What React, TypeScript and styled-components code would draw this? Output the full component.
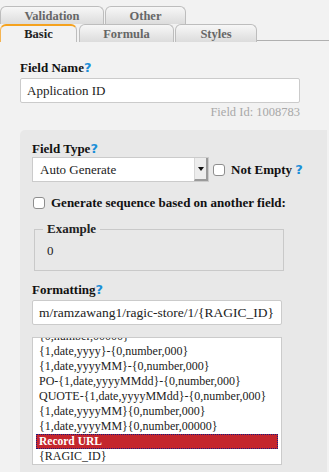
import React, { useLayoutEffect, useRef } from "react";
import styled, { createGlobalStyle, css } from "styled-components";

const GlobalStyle = createGlobalStyle`
  html, body {
    margin: 0;
    padding: 0;
    background: #f2f2f2;
  }
  body {
    font-family: "Liberation Serif", "Times New Roman", serif;
    color: #222;
  }
`;

const Page = styled.div`
  width: 329px;
  height: 472px;
  overflow: hidden;
  background: #f2f2f2;
  display: flex;
  flex-direction: column;
`;

const TabStrip = styled.div`
  padding-top: 6px;
  display: flex;
  flex-direction: column;
`;

const TabRow = styled.div`
  display: flex;
  align-items: flex-end;
  height: 18px;
`;

const Tab = styled.div<{ $w: number; $active?: boolean; $gap?: number }>`
  width: ${(p) => p.$w}px;
  margin-right: ${(p) => p.$gap ?? 1}px;
  height: 18px;
  box-sizing: border-box;
  display: flex;
  align-items: center;
  justify-content: center;
  font-size: 12.5px;
  font-weight: bold;
  color: #666;
  border: 1px solid #bdbdbd;
  border-bottom: none;
  border-radius: 6px 6px 0 0;
  background: linear-gradient(#f7f7f7, #dcdcdc);
  padding-top: 1px;
  ${(p) =>
    p.$active &&
    css`
      color: #222;
      background: #f2f2f2;
      border-top: 2px solid #f5a21e;
      border-left-color: #f5b451;
      padding-top: 0;
    `}
`;

const TabFiller = styled.div`
  flex: 1;
  height: 0;
  border-bottom: 1px solid #b0b0b0;
  margin-bottom: 1px;
`;

const Content = styled.div`
  flex: 1;
  display: flex;
  flex-direction: column;
  padding-left: 20px;
  padding-top: 18px;
`;

const Label = styled.div`
  font-size: 13px;
  font-weight: bold;
  line-height: 16px;
  color: #111;
`;

const Help = styled.span`
  color: #1b8fd8;
  font-family: "DejaVu Sans", sans-serif;
  font-size: 13px;
  font-weight: bold;
`;

const TextBox = styled.div<{ $w: number; $size?: number }>`
  width: ${(p) => p.$w}px;
  height: 25px;
  box-sizing: border-box;
  margin-top: 2px;
  background: #fff;
  border: 1px solid #cbcbcb;
  border-radius: 2px;
  display: flex;
  align-items: center;
  padding: 0 6px;
  font-size: ${(p) => p.$size ?? 13}px;
  color: #222;
  white-space: nowrap;
`;

const FieldId = styled.div`
  width: 280px;
  text-align: right;
  font-size: 12.5px;
  line-height: 14px;
  color: #a8a8a8;
  margin-top: 2px;
`;

const Panel = styled.div`
  flex: 1;
  margin-top: 11px;
  margin-right: 2px;
  background: #e8e8e8;
  border-radius: 5px 0 0 0;
  padding: 11px 0 0 12px;
  display: flex;
  flex-direction: column;
`;

const TypeRow = styled.div`
  display: flex;
  align-items: center;
`;

const Select = styled.div`
  width: 177px;
  height: 25px;
  box-sizing: border-box;
  background: #fff;
  border: 1px solid #cbcbcb;
  display: flex;
  align-items: stretch;
  font-size: 13px;
`;

const SelectText = styled.div`
  flex: 1;
  display: flex;
  align-items: center;
  padding-left: 7px;
`;

const SelectButton = styled.div`
  width: 14px;
  box-sizing: border-box;
  background: #ededed;
  border-left: 1px solid #d8d8d8;
  border-right: 2px solid #9a9a9a;
  border-bottom: 2px solid #9a9a9a;
  display: flex;
  align-items: center;
  justify-content: center;

  &::after {
    content: "";
    width: 0;
    height: 0;
    border-left: 3px solid transparent;
    border-right: 3px solid transparent;
    border-top: 4px solid #111;
    margin-top: 1px;
  }
`;

const Check = styled.span`
  width: 12px;
  height: 12px;
  box-sizing: border-box;
  border: 1px solid #8e8e8e;
  border-radius: 3px;
  background: #fff;
  flex: none;
`;

const CheckLabel = styled.span`
  font-size: 13px;
  font-weight: bold;
  color: #111;
  margin-left: 6px;
`;

const NotEmpty = styled.div`
  display: flex;
  align-items: center;
  margin-left: 4px;
`;

const SeqRow = styled.div`
  display: flex;
  align-items: center;
  height: 16px;
  margin-top: 13px;
  padding-left: 1px;
`;

const Fieldset = styled.fieldset`
  width: 250px;
  box-sizing: border-box;
  margin: 10px 0 0 2px;
  padding: 6px 12px 11px;
  border: 1px solid #c9c9c9;
  min-width: 0;
`;

const Legend = styled.legend`
  font-size: 13px;
  font-weight: bold;
  line-height: 16px;
  color: #222;
  padding: 0 4px;
  margin-left: -4px;
`;

const ExampleValue = styled.div`
  font-size: 13px;
  line-height: 16px;
  color: #222;
`;

const FormatLabel = styled(Label)`
  margin-top: 11px;
`;

const ListBox = styled.div`
  width: 250px;
  height: 128px;
  box-sizing: border-box;
  margin-top: 12px;
  background: #fff;
  border: 1px solid #cbcbcb;
  overflow: hidden;
  padding: 0 3px;
`;

const ListItem = styled.div<{ $selected?: boolean }>`
  height: 15px;
  line-height: 15px;
  font-size: 12px;
  padding-left: 3px;
  white-space: nowrap;
  color: #222;
  box-sizing: border-box;
  ${(p) =>
    p.$selected &&
    css`
      background: #c4262d;
      color: #fff;
      font-weight: bold;
      font-size: 11.5px;
      outline: 1px dotted #1a1a80;
      outline-offset: -1px;
    `}
`;

const items = [
  "{0,number,000}",
  "{0,number,00000}",
  "{1,date,yyyy}-{0,number,000}",
  "{1,date,yyyyMM}-{0,number,000}",
  "PO-{1,date,yyyyMMdd}-{0,number,000}",
  "QUOTE-{1,date,yyyyMMdd}-{0,number,000}",
  "{1,date,yyyyMM}{0,number,000}",
  "{1,date,yyyyMM}{0,number,00000}",
  "Record URL",
  "{RAGIC_ID}",
];

export default function App() {
  const listRef = useRef<HTMLDivElement>(null);
  useLayoutEffect(() => {
    if (listRef.current) listRef.current.scrollTop = 15 + 9;
  }, []);

  return (
    <>
      <GlobalStyle />
      <Page>
        <TabStrip>
          <TabRow>
            <Tab $w={104} $gap={1}>Validation</Tab>
            <Tab $w={81}>Other</Tab>
          </TabRow>
          <TabRow>
            <Tab $w={77} $gap={2} $active>
              Basic
            </Tab>
            <Tab $w={95} $gap={1}>Formula</Tab>
            <Tab $w={82} $gap={0}>Styles</Tab>
            <TabFiller />
          </TabRow>
        </TabStrip>
        <Content>
          <Label>
            Field Name<Help>?</Help>
          </Label>
          <TextBox $w={280}>Application ID</TextBox>
          <FieldId>Field Id: 1008783</FieldId>
          <Panel>
            <Label>
              Field Type<Help>?</Help>
            </Label>
            <TypeRow>
              <Select>
                <SelectText>Auto Generate</SelectText>
                <SelectButton />
              </Select>
              <NotEmpty>
                <Check />
                <CheckLabel>
                  Not Empty <Help>?</Help>
                </CheckLabel>
              </NotEmpty>
            </TypeRow>
            <SeqRow>
              <Check />
              <CheckLabel>Generate sequence based on another field:</CheckLabel>
            </SeqRow>
            <Fieldset>
              <Legend>Example</Legend>
              <ExampleValue>0</ExampleValue>
            </Fieldset>
            <FormatLabel>
              Formatting<Help>?</Help>
            </FormatLabel>
            <TextBox $w={250} $size={13.5}>
              m/ramzawang1/ragic-store/1/{"{RAGIC_ID}"}
            </TextBox>
            <ListBox ref={listRef}>
              {items.map((it) => (
                <ListItem key={it} $selected={it === "Record URL"}>
                  {it}
                </ListItem>
              ))}
            </ListBox>
          </Panel>
        </Content>
      </Page>
    </>
  );
}
